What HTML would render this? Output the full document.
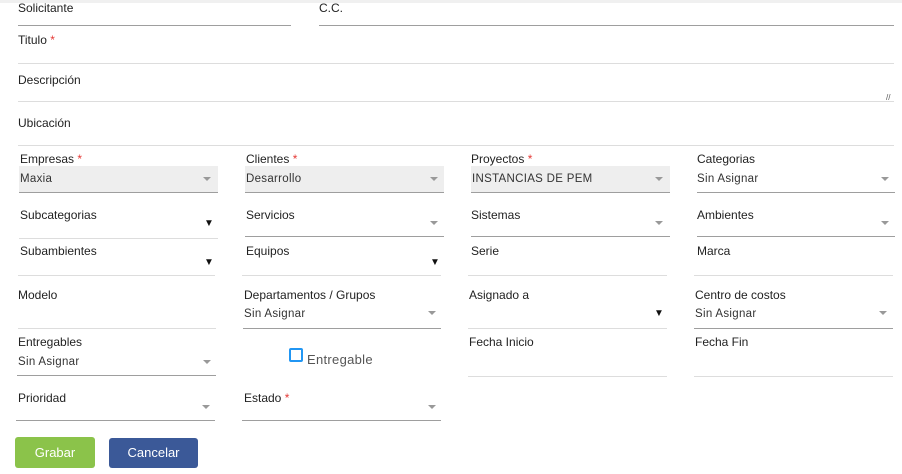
<!DOCTYPE html>
<html><head><meta charset="utf-8"><style>
body{margin:0;width:902px;height:474px;background:#fff;position:relative;overflow:hidden;font-family:"Liberation Sans",sans-serif;color:#222}
.a{position:absolute}
.l{position:absolute;font-size:12px;color:#222;white-space:nowrap}
.v{position:absolute;font-size:11.5px;color:#333;letter-spacing:.3px;white-space:nowrap}
.ln{position:absolute;height:1px;background:#ddd}
.dk{background:#9e9e9e}
.g{position:absolute;background:#eee}
.r{color:#e53935}
.ar{position:absolute;width:0;height:0;border-left:4px solid transparent;border-right:4px solid transparent;border-top:4px solid #999}
.bk{position:absolute;font-size:10px;color:#111}
.btn{position:absolute;color:#fff;font-size:13px;text-align:center;border-radius:3px;line-height:31px}
</style></head><body>
<div class="a" style="left:0;top:0;width:902px;height:3px;background:#f0f0f0"></div>
<div class="l" style="left:18px;top:1px">Solicitante</div>
<div class="ln dk" style="left:18px;top:25px;width:273px"></div>
<div class="l" style="left:319px;top:1px">C.C.</div>
<div class="ln dk" style="left:319px;top:25px;width:575px"></div>
<div class="l" style="left:18px;top:33px">Titulo <span class="r">*</span></div>
<div class="ln" style="left:18px;top:63px;width:876px"></div>
<div class="l" style="left:18px;top:73px">Descripción</div>
<div class="ln" style="left:18px;top:101px;width:876px"></div>
<div class="a" style="left:886px;top:93px;font-size:8px;color:#555">//</div>
<div class="l" style="left:18px;top:116px">Ubicación</div>
<div class="ln" style="left:18px;top:145px;width:876px"></div>

<div class="l" style="left:20px;top:152px">Empresas <span class="r">*</span></div>
<div class="g" style="left:19px;top:166px;width:199px;height:26px"></div>
<div class="v" style="left:20px;top:173px">Maxia</div><div class="ar" style="left:203px;top:177px"></div>
<div class="ln dk" style="left:19px;top:192px;width:199px"></div>

<div class="l" style="left:246px;top:152px">Clientes <span class="r">*</span></div>
<div class="g" style="left:245px;top:166px;width:199px;height:26px"></div>
<div class="v" style="left:246px;top:173px">Desarrollo</div><div class="ar" style="left:430px;top:177px"></div>
<div class="ln dk" style="left:245px;top:192px;width:199px"></div>

<div class="l" style="left:471px;top:152px">Proyectos <span class="r">*</span></div>
<div class="g" style="left:471px;top:166px;width:199px;height:26px"></div>
<div class="v" style="left:472px;top:173px">INSTANCIAS DE PEM</div><div class="ar" style="left:655px;top:177px"></div>
<div class="ln dk" style="left:471px;top:192px;width:199px"></div>

<div class="l" style="left:697px;top:152px">Categorias</div>
<div class="v" style="left:697px;top:173px">Sin Asignar</div><div class="ar" style="left:881px;top:177px"></div>
<div class="ln dk" style="left:697px;top:192px;width:198px"></div>

<div class="l" style="left:20px;top:208px">Subcategorias</div><div class="bk" style="left:204px;top:218px">▼</div>
<div class="ln" style="left:19px;top:238px;width:199px"></div>
<div class="l" style="left:246px;top:208px">Servicios</div><div class="ar" style="left:430px;top:221px"></div>
<div class="ln dk" style="left:245px;top:236px;width:199px"></div>
<div class="l" style="left:471px;top:208px">Sistemas</div><div class="ar" style="left:655px;top:221px"></div>
<div class="ln dk" style="left:471px;top:236px;width:199px"></div>
<div class="l" style="left:697px;top:208px">Ambientes</div><div class="ar" style="left:881px;top:221px"></div>
<div class="ln dk" style="left:697px;top:236px;width:198px"></div>

<div class="l" style="left:20px;top:244px">Subambientes</div><div class="bk" style="left:204px;top:257px">▼</div>
<div class="ln" style="left:18px;top:275px;width:197px"></div>
<div class="l" style="left:246px;top:244px">Equipos</div><div class="bk" style="left:430px;top:257px">▼</div>
<div class="ln" style="left:242px;top:275px;width:199px"></div>
<div class="l" style="left:471px;top:244px">Serie</div>
<div class="ln" style="left:468px;top:275px;width:199px"></div>
<div class="l" style="left:697px;top:244px">Marca</div>
<div class="ln" style="left:694px;top:275px;width:199px"></div>

<div class="l" style="left:18px;top:288px">Modelo</div>
<div class="ln" style="left:18px;top:328px;width:198px"></div>
<div class="l" style="left:244px;top:288px">Departamentos / Grupos</div>
<div class="v" style="left:244px;top:308px">Sin Asignar</div><div class="ar" style="left:428px;top:311px"></div>
<div class="ln dk" style="left:243px;top:328px;width:198px"></div>
<div class="l" style="left:469px;top:288px">Asignado a</div><div class="bk" style="left:654px;top:308px">▼</div>
<div class="ln" style="left:468px;top:328px;width:199px"></div>
<div class="l" style="left:695px;top:288px">Centro de costos</div>
<div class="v" style="left:695px;top:308px">Sin Asignar</div><div class="ar" style="left:879px;top:311px"></div>
<div class="ln dk" style="left:694px;top:328px;width:199px"></div>

<div class="l" style="left:18px;top:335px">Entregables</div>
<div class="v" style="left:18px;top:356px">Sin Asignar</div><div class="ar" style="left:203px;top:360px"></div>
<div class="ln dk" style="left:17px;top:375px;width:199px"></div>
<div class="a" style="left:289px;top:348px;width:10px;height:10px;border:2px solid #2196f3;border-radius:2px"></div>
<div class="a" style="left:307px;top:352px;font-size:13px;color:#555;letter-spacing:.3px">Entregable</div>
<div class="l" style="left:469px;top:335px">Fecha Inicio</div>
<div class="ln" style="left:468px;top:376px;width:199px"></div>
<div class="l" style="left:695px;top:335px">Fecha Fin</div>
<div class="ln" style="left:694px;top:376px;width:199px"></div>

<div class="l" style="left:18px;top:391px">Prioridad</div><div class="ar" style="left:202px;top:405px"></div>
<div class="ln dk" style="left:16px;top:420px;width:199px"></div>
<div class="l" style="left:244px;top:391px">Estado <span class="r">*</span></div><div class="ar" style="left:428px;top:405px"></div>
<div class="ln dk" style="left:242px;top:420px;width:199px"></div>

<div class="btn" style="left:15px;top:437px;width:80px;height:31px;background:#8bc34a">Grabar</div>
<div class="btn" style="left:109px;top:438px;width:89px;height:30px;background:#3b5998;line-height:30px">Cancelar</div>
</body></html>
